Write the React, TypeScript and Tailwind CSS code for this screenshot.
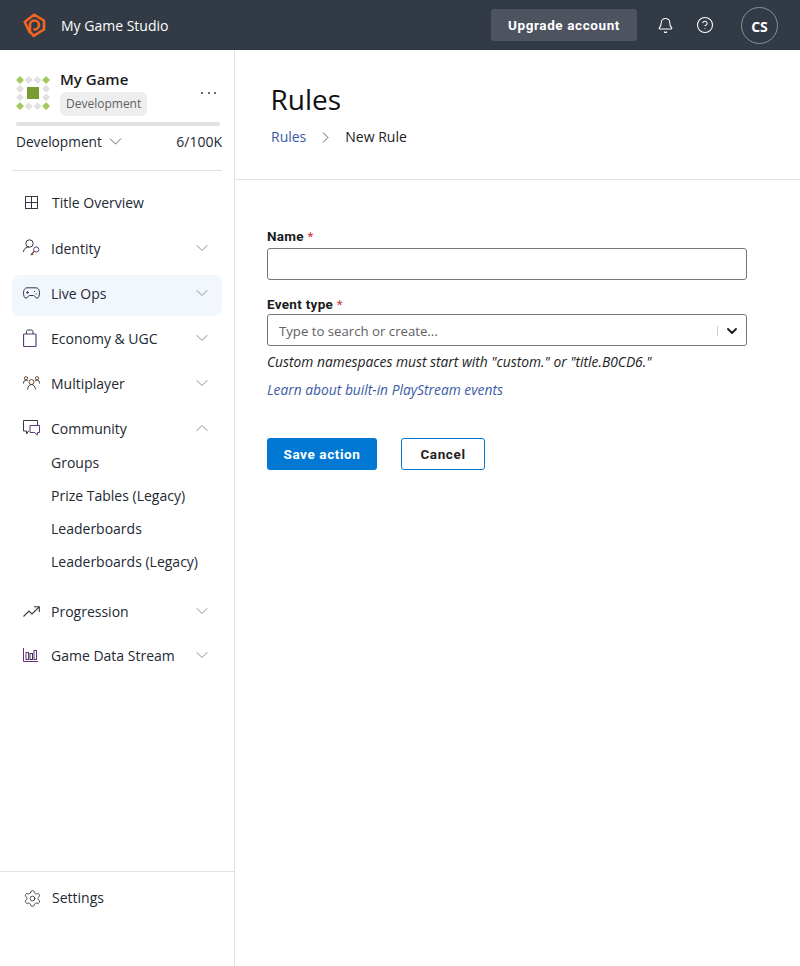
import { ChevronDown, ChevronUp, Bell, CircleHelp, Settings } from 'lucide-react';

const ink = '#323a45';

function GridIcon() {
  return (
    <svg width="14" height="14" viewBox="0 0 14 14" fill="none" stroke={ink} strokeWidth="1">
      <rect x="0.5" y="0.5" width="12" height="12" />
      <path d="M6.5 0.5v12M0.5 6.5h12" />
    </svg>
  );
}

function IdentityIcon() {
  return (
    <svg width="17" height="18" viewBox="0 0 17 18" fill="none" stroke={ink} strokeWidth="1">
      <circle cx="6.5" cy="4.5" r="3.7" />
      <path d="M0.5 13c0-3 2.500-5 5.500-5" />
      <circle cx="13.2" cy="10.5" r="2.6" stroke="#5c3a7e" />
      <path d="M11.300 12.300l-3.500 3.700M8.800 14.500l1.200 1.200" stroke="#7b4a2a" strokeWidth="1.3" />
    </svg>
  );
}

function GamepadIcon() {
  return (
    <svg width="17" height="12" viewBox="0 0 17 12" fill="none" stroke={ink} strokeWidth="1">
      <path d="M4 0.8h9c2 0 3.500 2 3.500 5 0 3-1 5.400-2.500 5.400-1.500 0-2-2.700-3.500-2.700h-4c-1.500 0-2 2.700-3.500 2.700C1.500 11.200 0.500 8.800 0.500 5.800c0-3 1.500-5 3.500-5z" />
      <path d="M3 5.500h3M4.500 4v3" stroke="#5c3a7e" />
      <path d="M11 4.500h1M12.500 7h1" />
    </svg>
  );
}

function BagIcon() {
  return (
    <svg width="14" height="18" viewBox="0 0 14 18" fill="none" stroke={ink} strokeWidth="1">
      <rect x="0.5" y="5" width="12.500" height="12.500" rx="1" stroke="#5c3a7e" strokeWidth="1.2" />
      <path d="M3.500 5V2.500c0-1 .7-1.500 1.500-1.500h3.500c.8 0 1.500.5 1.500 1.500V5" />
    </svg>
  );
}

function PeopleIcon() {
  return (
    <svg width="17" height="14" viewBox="0 0 17 14" fill="none" stroke={ink} strokeWidth="1">
      <circle cx="8.500" cy="6" r="2.500" stroke="#7b4a2a" />
      <path d="M4.500 13.500c.4-3 1.800-5 4-5s3.600 2 4 5" />
      <circle cx="3" cy="2.200" r="1.600" stroke="#7b4a2a" />
      <circle cx="14" cy="2.200" r="1.600" stroke="#7b4a2a" />
      <path d="M0.500 7.500c0-2 .9-3.500 2.500-3.500 .7 0 1.500.4 1.800 1M16.500 7.500c0-2-.9-3.500-2.500-3.500-.7 0-1.500.4-1.800 1" />
    </svg>
  );
}

function ChatIcon() {
  return (
    <svg width="17" height="16" viewBox="0 0 17 16" fill="none" stroke={ink} strokeWidth="1">
      <path d="M14.500 5V0.500H0.500V11H3.500V14L5.500 11H6" />
      <path d="M7 5.500H16.500V12.500H14.500V15L11.500 12.500H7z" stroke="#5c3a7e" />
    </svg>
  );
}

function TrendIcon() {
  return (
    <svg width="17" height="11" viewBox="0 0 17 11" fill="none" stroke={ink} strokeWidth="1.1">
      <path d="M0.500 10.500L6 5l3 3 7-7" />
      <path d="M11 0.700h5.300V6" />
    </svg>
  );
}

function BarsIcon() {
  return (
    <svg width="15" height="14" viewBox="0 0 15 14" fill="none" stroke="#6a2c80" strokeWidth="1">
      <path d="M0.500 0v13.500H15" />
      <rect x="3" y="4.500" width="2.500" height="7" />
      <rect x="7" y="5.500" width="2.500" height="6" stroke={ink} />
      <rect x="11" y="2.500" width="2.500" height="9" />
    </svg>
  );
}

function StudioLogo() {
  return (
    <svg width="23" height="25" viewBox="0 0 23 25" fill="none" stroke="#f26522" strokeWidth="2.600" strokeLinejoin="round" strokeLinecap="round">
      <path d="M6.800 19.500L1.700 9 11 1.700 21 7.500V16.500L10.500 22.800 7 18.500V12a4.500 4.500 0 1 1 4.500 4.500" />
    </svg>
  );
}

function GameLogo() {
  const cells: { x: number; y: number; corner: boolean }[] = [];
  for (let r = 0; r < 4; r++) {
    for (let c = 0; c < 4; c++) {
      if ((r === 1 || r === 2) && (c === 1 || c === 2)) continue;
      cells.push({ x: 4 + c * 8.7, y: 4 + r * 8.7, corner: (r === 0 || r === 3) && (c === 0 || c === 3) });
    }
  }
  return (
    <svg width="34" height="34" viewBox="0 0 34 34">
      {cells.map((d, i) => (
        <rect
          key={i}
          x={d.x - 2.8}
          y={d.y - 2.8}
          width="5.6"
          height="5.6"
          transform={`rotate(45 ${d.x} ${d.y})`}
          fill={d.corner ? '#a5c85c' : '#e1e1e1'}
        />
      ))}
      <rect x="11" y="11" width="12" height="12" fill="#7a9c32" />
    </svg>
  );
}

const navTop = [
  { label: 'Identity', icon: <IdentityIcon /> },
  { label: 'Live Ops', icon: <GamepadIcon />, active: true },
  { label: 'Economy & UGC', icon: <BagIcon /> },
  { label: 'Multiplayer', icon: <PeopleIcon /> },
];

const communityLinks = ['Groups', 'Prize Tables (Legacy)', 'Leaderboards', 'Leaderboards (Legacy)'];

function NavRow({ label, icon, active, open }: { label: string; icon: React.ReactNode; active?: boolean; open?: boolean }) {
  return (
    <div className={`flex h-[41px] items-center rounded-lg pr-[10px] pb-[5px] pl-[11px] ${active ? 'bg-[#f2f6fd]' : ''}`}>
      <span className="flex w-[28px] shrink-0 items-center">{icon}</span>
      <span className="flex-1 text-[14px] text-[#222933]">{label}</span>
      {open ? (
        <ChevronUp size={20} strokeWidth={1.2} className="text-[#8b9098]" />
      ) : (
        <ChevronDown size={20} strokeWidth={1.2} className="text-[#8b9098]" />
      )}
    </div>
  );
}

export default function App() {
  return (
    <div className="flex h-[966px] w-[800px] flex-col overflow-hidden bg-white font-['Open_Sans',sans-serif] text-[#1b1b1b]">
      <header className="flex h-[50px] shrink-0 items-center bg-[#323a45] pl-[23px] text-white">
        <StudioLogo />
        <span className="ml-[15px] text-[14px] font-medium">My Game Studio</span>
        <button className="ml-auto h-[32px] w-[146px] rounded-[3px] bg-[#4d535f] font-['Roboto',sans-serif] text-[13.5px] font-bold tracking-[0.6px]">
          Upgrade account
        </button>
        <Bell size={17} strokeWidth={1.5} className="ml-[20px]" />
        <CircleHelp size={18} strokeWidth={1.4} className="ml-[22px]" />
        <div className="mr-[22px] ml-[27px] flex h-[37px] w-[37px] items-center justify-center rounded-full border border-[#8b9098] pt-[2px] text-[14px] font-bold">
          CS
        </div>
      </header>

      <div className="flex min-h-0 flex-1">
        <aside className="flex w-[235px] shrink-0 flex-col border-r border-[#e1e1e1] px-[12px]">
          <div className="border-b border-[#e1e1e1] pt-[19px] pb-[18px] pl-[4px]">
            <div className="flex">
              <div className="pt-[7px]">
                <GameLogo />
              </div>
              <div className="ml-[10px] flex-1">
                <div className="text-[15px] leading-[21px] font-semibold">My Game</div>
                <div className="mt-[2px] inline-block rounded-md bg-[#eeeeee] px-[6px] text-[12px] leading-[24px] text-[#616161]">
                  Development
                </div>
              </div>
              <div className="mt-[23px] mr-[6px] flex h-[2px] gap-[4.5px]">
                <span className="h-[2px] w-[2px] rounded-full bg-[#323a45]" />
                <span className="h-[2px] w-[2px] rounded-full bg-[#323a45]" />
                <span className="h-[2px] w-[2px] rounded-full bg-[#323a45]" />
              </div>
            </div>
            <div className="mt-[6px] mr-[2px] h-[4px] rounded-full bg-[#e1e1e1]" />
            <div className="mt-[5px] flex items-center text-[14px] leading-[20px] text-[#222933]">
              <span className="text-[13.7px]">Development</span>
              <ChevronDown size={21} strokeWidth={1.1} className="ml-[3px] text-[#5c6470]" />
              <span className="ml-auto">6/100K</span>
            </div>
          </div>

          <nav className="mt-[11px] flex flex-col">
            <div className="mb-[7px] flex h-[41px] items-center pl-[13px] text-[14px] text-[#222933]">
              <span className="flex w-[27px] shrink-0 items-center">
                <GridIcon />
              </span>
              Title Overview
            </div>
            <div className="flex flex-col gap-[4px]">
              {navTop.map((item) => (
                <NavRow key={item.label} label={item.label} icon={item.icon} active={item.active} />
              ))}
              <NavRow label="Community" icon={<ChatIcon />} open />
            </div>
            <div className="mb-[15px] flex flex-col pl-[39px]">
              {communityLinks.map((link) => (
                <div key={link} className="h-[33px] text-[14px] leading-[33px] text-[#222933] first:-mt-[5px]">
                  {link}
                </div>
              ))}
            </div>
            <div className="flex flex-col gap-[3px]">
              <NavRow label="Progression" icon={<TrendIcon />} />
              <NavRow label="Game Data Stream" icon={<BarsIcon />} />
            </div>
          </nav>

          <div className="-mx-[12px] mt-auto mb-[58px] flex items-center border-t border-[#e1e1e1] pt-[16px] pl-[23px] text-[14px] text-[#222933]">
            <Settings size={19} strokeWidth={1} className="mr-[10px]" />
            <span className="leading-[20px]">Settings</span>
          </div>
        </aside>

        <main className="min-w-0 flex-1">
          <div className="h-[130px] border-b border-[#e1e1e1] pt-[30px] pl-[36px]">
            <h1 className="-ml-[0.5px] text-[28px] leading-[38px] font-normal text-[#111]">Rules</h1>
            <div className="mt-[9px] flex items-center text-[14px] leading-[20px]">
              <a className="text-[#3b5ba5]">Rules</a>
              <svg width="7" height="11" viewBox="0 0 7 11" fill="none" stroke="#5c6470" strokeWidth="1" className="mx-[16px]">
                <path d="M1 0.5l5 5-5 5" />
              </svg>
              <span className="text-[#222]">New Rule</span>
            </div>
          </div>

          <form className="pt-[46px] pl-[32px]">
            <label className="block font-['Roboto',sans-serif] text-[13.5px] leading-[20px] font-bold tracking-[0.3px] text-[#1b1b1b]">
              Name <span className="font-normal text-[#d13438]">*</span>
            </label>
            <input className="mt-[2px] block h-[32px] w-[480px] rounded-[3px] border border-[#767676] bg-white" />
            <label className="mt-[14px] block font-['Roboto',sans-serif] text-[13.5px] leading-[20px] font-bold tracking-[0.3px] text-[#1b1b1b]">
              Event type <span className="font-normal text-[#d13438]">*</span>
            </label>
            <div className="flex h-[32px] w-[480px] items-center rounded-[3px] border border-[#767676] pt-[2px] pl-[11px]">
              <span className="flex-1 pt-[2px] text-[13.2px] text-[#616161]">Type to search or create...</span>
              <span className="h-[10px] w-px bg-[#cccccc]" />
              <ChevronDown size={16} strokeWidth={2.8} className="mx-[6px] text-[#1b1b1b]" />
            </div>
            <p className="mt-[6px] text-[13.8px] leading-[20px] text-[#222] italic">
              Custom namespaces must start with "custom." or "title.B0CD6."
            </p>
            <a className="mt-[8px] block text-[13.8px] leading-[20px] text-[#3b5ba5] italic">
              Learn about built-in PlayStream events
            </a>
            <div className="mt-[38px] flex gap-[24px]">
              <button
                type="button"
                className="h-[32px] w-[110px] rounded-[3px] bg-[#0078d4] font-['Roboto',sans-serif] text-[13.5px] font-bold tracking-[0.6px] text-white"
              >
                Save action
              </button>
              <button
                type="button"
                className="h-[32px] w-[84px] rounded-[3px] border border-[#0078d4] bg-white font-['Roboto',sans-serif] text-[13.5px] font-bold tracking-[0.6px] text-[#222]"
              >
                Cancel
              </button>
            </div>
          </form>
        </main>
      </div>
    </div>
  );
}
